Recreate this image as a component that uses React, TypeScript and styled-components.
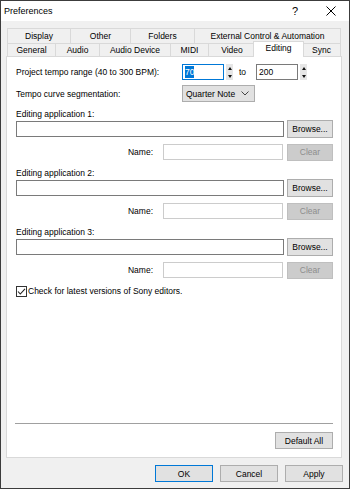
import React from "react";
import styled, { createGlobalStyle, css } from "styled-components";

const GlobalStyle = createGlobalStyle`
	html, body {
		margin: 0;
		padding: 0;
		background: #ffffff;
	}
	* {
		box-sizing: border-box;
	}
`;

const tabsTop = [
	{ label: "Display", w: 63 },
	{ label: "Other", w: 60 },
	{ label: "Folders", w: 64 },
	{ label: "External Control & Automation", w: 147 },
];

const tabsBottom = [
	{ label: "General", w: 48 },
	{ label: "Audio", w: 44 },
	{ label: "Audio Device", w: 71 },
	{ label: "MIDI", w: 38 },
	{ label: "Video", w: 47 },
	{ label: "Editing", w: 47, selected: true },
	{ label: "Sync", w: 39 },
];

const Spinner = () => (
	<Spin>
		<SpinHalf>
			<Arrow $up />
		</SpinHalf>
		<SpinHalf>
			<Arrow />
		</SpinHalf>
	</Spin>
);

const EditorGroup = ({ n }: { n: number }) => (
	<>
		<GroupLabel>Editing application {n}:</GroupLabel>
		<PathRow>
			<TextBox />
			<Button $w={46} $tall>
				Browse...
			</Button>
		</PathRow>
		<NameRow>
			<NameLabel>Name:</NameLabel>
			<TextBox $w={120} $disabled />
			<Button $w={46} disabled>
				Clear
			</Button>
		</NameRow>
	</>
);

const App = () => {
	return (
		<>
			<GlobalStyle />
			<Window>
				<TitleBar>
					<Title>Preferences</Title>
					<TitleButton>?</TitleButton>
					<TitleButton>
						<svg width="10" height="10" viewBox="0 0 10 10">
							<path d="M0.5 0.5 L9.5 9.5 M9.5 0.5 L0.5 9.5" stroke="#000" strokeWidth="1" />
						</svg>
					</TitleButton>
				</TitleBar>
				<Body>
					<TabRow $h={15}>
						{tabsTop.map((t, i) => (
							<Tab key={t.label} $w={t.w} $h={15} $last={i === tabsTop.length - 1}>
								{t.label}
							</Tab>
						))}
					</TabRow>
					<TabRow $h={13}>
						{tabsBottom.map((t, i) => (
							<Tab
								key={t.label}
								$w={t.w}
								$h={13}
								$last={i === tabsBottom.length - 1}
								$selected={!!t.selected}
							>
								{t.label}
							</Tab>
						))}
					</TabRow>
					<Panel>
						<Row>
							<RowLabel>Project tempo range (40 to 300 BPM):</RowLabel>
							<NumBox $focus>
								<SelText>70</SelText>
							</NumBox>
							<Spinner />
							<ToText>to</ToText>
							<NumBox>200</NumBox>
							<Spinner />
						</Row>
						<Row $mt={5} $h={17}>
							<RowLabel>Tempo curve segmentation:</RowLabel>
							<Select>
								<span>Quarter Note</span>
								<svg width="8" height="5" viewBox="0 0 8 5">
									<path d="M0.5 0.5 L4 4 L7.5 0.5" fill="none" stroke="#444" strokeWidth="1" />
								</svg>
							</Select>
						</Row>
						<Spacer $h={6} />
						<EditorGroup n={1} />
						<Spacer $h={7} />
						<EditorGroup n={2} />
						<Spacer $h={7} />
						<EditorGroup n={3} />
						<CheckRow>
							<svg width="11" height="11" viewBox="0 0 11 11">
								<rect x="0.5" y="0.5" width="10" height="10" fill="#fff" stroke="#333" />
								<path d="M2 5.5 L4.3 8 L9 2.8" fill="none" stroke="#222" strokeWidth="1.1" />
							</svg>
							<span>Check for latest versions of Sony editors.</span>
						</CheckRow>
						<Grow />
						<Separator />
						<DefaultRow>
							<Button $w={58}>Default All</Button>
						</DefaultRow>
					</Panel>
					<Footer>
						<Button $w={58} $primary>
							OK
						</Button>
						<Button $w={58}>Cancel</Button>
						<Button $w={58}>Apply</Button>
					</Footer>
				</Body>
			</Window>
		</>
	);
};

const Window = styled.div`
	width: 350px;
	height: 489px;
	border: 1px solid #3c3c3c;
	background: #f0f0f0;
	display: flex;
	flex-direction: column;
	font-family: "Liberation Sans", Arial, sans-serif;
	font-size: 8.5px;
	color: #000;
`;
const TitleBar = styled.div`
	height: 20px;
	background: #ffffff;
	display: flex;
	align-items: center;
	padding-left: 3px;
`;
const Title = styled.div`
	flex: 1;
	font-size: 9px;
`;
const TitleButton = styled.div`
	width: 36px;
	height: 20px;
	display: flex;
	align-items: center;
	justify-content: center;
	font-size: 11px;
`;
const Body = styled.div`
	flex: 1;
	display: flex;
	flex-direction: column;
	padding: 7px 7px 0 5px;
`;
const TabRow = styled.div<{ $h: number }>`
	display: flex;
	height: ${(p) => p.$h}px;
	margin: 0 1px;
`;
const Tab = styled.div<{ $w: number; $h: number; $last?: boolean; $selected?: boolean }>`
	width: ${(p) => p.$w}px;
	height: ${(p) => p.$h}px;
	line-height: ${(p) => p.$h - 1}px;
	text-align: center;
	white-space: nowrap;
	background: #f0f0f0;
	border-top: 1px solid #d9d9d9;
	border-left: 1px solid #d9d9d9;
	${(p) => p.$last && "border-right: 1px solid #d9d9d9;"}
	${(p) =>
		p.$selected &&
		css`
			position: relative;
			z-index: 2;
			width: ${p.$w + 4}px;
			height: ${p.$h + 3}px;
			margin: -2px -2px -1px -2px;
			background: #ffffff;
			border-right: 1px solid #d9d9d9;
			line-height: ${p.$h - 1}px;
		`}
`;
const Panel = styled.div`
	height: 402px;
	background: #ffffff;
	border: 1px solid #d9d9d9;
	display: flex;
	flex-direction: column;
	padding: 7px 8px 8px 9px;
`;
const Row = styled.div<{ $mt?: number; $h?: number }>`
	display: flex;
	align-items: center;
	height: ${(p) => p.$h || 16}px;
	margin-top: ${(p) => p.$mt || 0}px;
`;
const RowLabel = styled.div`
	width: 166px;
	white-space: nowrap;
`;
const NumBox = styled.div<{ $focus?: boolean }>`
	width: 42px;
	height: 16px;
	border: 1px solid ${(p) => (p.$focus ? "#0078d7" : "#7a7a7a")};
	background: #fff;
	padding-left: 2px;
	display: flex;
	align-items: center;
`;
const SelText = styled.span`
	background: #0078d7;
	color: #fff;
	line-height: 12px;
`;
const Spin = styled.div`
	width: 7px;
	height: 16px;
	margin-left: 2px;
	display: flex;
	flex-direction: column;
`;
const SpinHalf = styled.div`
	flex: 1;
	background: #e6e6e6;
	display: flex;
	align-items: center;
	justify-content: center;
`;
const Arrow = styled.div<{ $up?: boolean }>`
	width: 0;
	height: 0;
	border-left: 2.5px solid transparent;
	border-right: 2.5px solid transparent;
	${(p) => (p.$up ? "border-bottom: 3px solid #111;" : "border-top: 3px solid #111;")}
`;
const ToText = styled.div`
	margin: 0 6px 0 6px;
	width: 11px;
`;
const Select = styled.div`
	width: 73px;
	height: 17px;
	border: 1px solid #adadad;
	background: #e1e1e1;
	display: flex;
	align-items: center;
	justify-content: space-between;
	padding: 0 5px 0 3px;
`;
const Spacer = styled.div<{ $h: number }>`
	height: ${(p) => p.$h}px;
	flex: none;
`;
const GroupLabel = styled.div`
	height: 12px;
	line-height: 12px;
`;
const PathRow = styled.div`
	display: flex;
	align-items: center;
	gap: 3px;
	height: 16px;
	margin-top: 1px;
`;
const NameRow = styled.div`
	display: flex;
	align-items: center;
	justify-content: flex-end;
	gap: 4px;
	height: 16px;
	margin-top: 7px;
`;
const NameLabel = styled.div`
	margin-right: 6px;
`;
const TextBox = styled.div<{ $w?: number; $disabled?: boolean }>`
	height: 16px;
	${(p) => (p.$w ? `width: ${p.$w}px;` : "flex: 1;")}
	background: #fff;
	border: 1px solid ${(p) => (p.$disabled ? "#cccccc" : "#7a7a7a")};
`;
const Button = styled.button<{ $w: number; $primary?: boolean; $tall?: boolean }>`
	width: ${(p) => p.$w}px;
	height: ${(p) => (p.$tall ? 18 : 17)}px;
	padding: 0;
	font: inherit;
	color: #000;
	background: #e1e1e1;
	border: 1px solid #adadad;
	border-radius: 0;
	flex: none;
	${(p) => p.$tall && "margin: -1px 0;"}
	${(p) =>
		p.$primary &&
		css`
			border-color: #0078d7;
		`}
	&:disabled {
		background: #cccccc;
		border-color: #bfbfbf;
		color: #8c8c8c;
	}
`;
const CheckRow = styled.div`
	display: flex;
	align-items: center;
	gap: 1px;
	height: 12px;
	margin-top: 7px;
	& > svg {
		flex: none;
	}
`;
const Grow = styled.div`
	flex: 1;
`;
const Separator = styled.div`
	height: 1px;
	margin-left: -1px;
	background: #a0a0a0;
`;
const DefaultRow = styled.div`
	display: flex;
	justify-content: flex-end;
	margin-top: 8px;
`;
const Footer = styled.div`
	display: flex;
	justify-content: flex-end;
	gap: 7px;
	padding-top: 7px;
	margin-right: -1px;
`;

export default App;
